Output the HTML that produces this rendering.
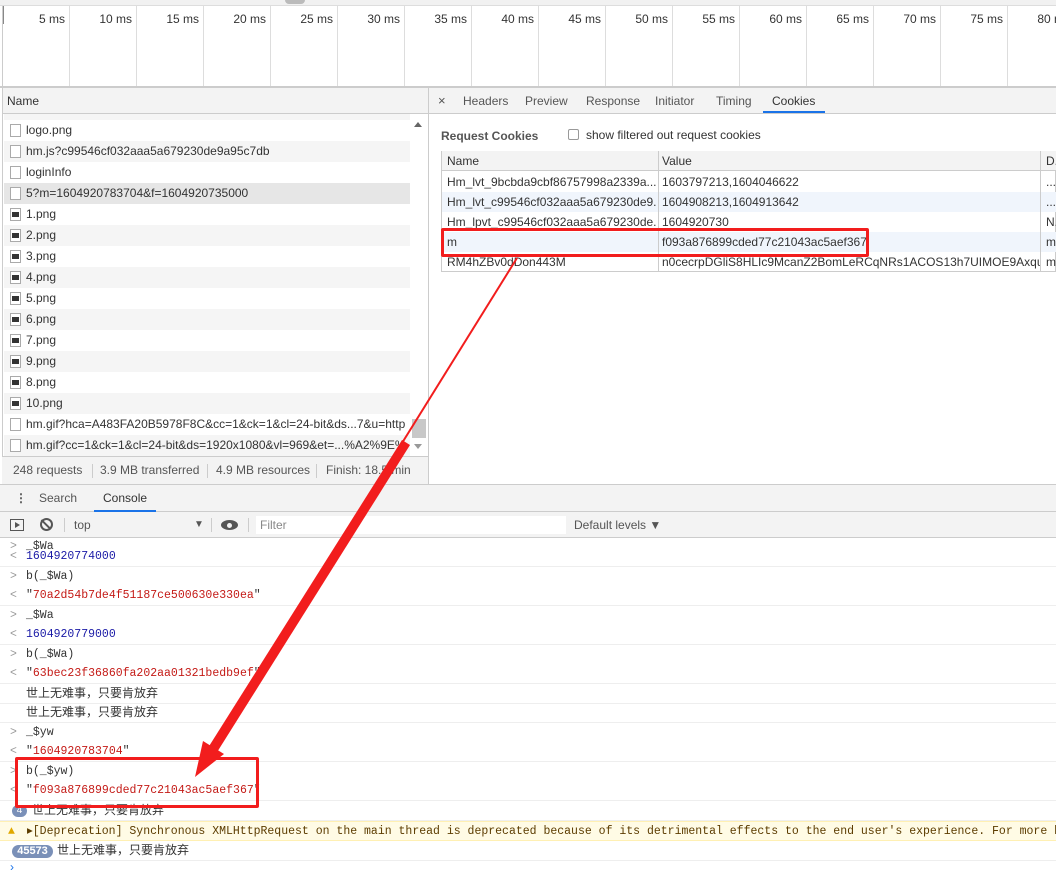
<!DOCTYPE html>
<html><head><meta charset="utf-8"><style>
*{box-sizing:border-box;margin:0;padding:0}
body{width:1056px;height:869px;overflow:hidden;background:#fff;font-family:"Liberation Sans","Noto Sans CJK SC",sans-serif;font-size:12px;color:#333;position:relative}
.a{position:absolute;white-space:nowrap}
.mono{font-family:"Liberation Mono","Noto Sans CJK SC",monospace;font-size:11.5px}
.row{position:absolute;left:4px;width:406px;height:21px;line-height:21px;padding-left:22px}
.ic{position:absolute;left:6px;top:4px;width:11px;height:13px;border:1px solid #aaa;background:#fff}
.ic.img::after{content:"";position:absolute;left:1px;top:3px;width:7px;height:5px;background:#333}
.tr{position:absolute;left:442px;width:614px;height:20px;line-height:20px}
.tr span{position:absolute;top:0;overflow:hidden}
.c1{left:5px;width:210px}.c2{left:220px;width:378px}.c3{left:604px;width:10px}
.cl{position:absolute;left:0;width:1056px;height:20px;line-height:19px;border-bottom:1px solid #eee}
</style></head><body>
<div class="a" style="left:0;top:0;width:1056px;height:6px;background:#f1f1f1;border-bottom:1px solid #ddd"></div>
<div class="a" style="left:285px;top:0;width:20px;height:4px;background:#bbb;border-radius:0 0 8px 8px"></div>
<div class="a" style="left:2px;top:6px;width:2px;height:18px;background:#888"></div>
<div class="a" style="left:2px;top:6px;width:1054px;height:80px;border-left:1px solid #ccc"></div>
<div id="tl"></div>
<div class="a" style="left:0;top:86px;width:1056px;height:2px;background:#ccc"></div>
<!-- left panel -->
<div class="a" style="left:2px;top:88px;width:426px;height:26px;background:#f3f3f3;border-bottom:1px solid #ccc;line-height:26px;padding-left:5px">Name</div>
<div class="a" style="left:428px;top:88px;width:1px;height:396px;background:#ccc"></div>
<div class="a" style="left:2px;top:88px;width:1px;height:396px;background:#ccc"></div>
<div class="row" style="top:114px;height:6px;background:#f5f5f5"></div>
<div id="rows"></div>
<div class="a" style="left:410px;top:114px;width:18px;height:342px;background:#fff"></div>
<div class="a" style="left:414px;top:122px;border:4px solid transparent;border-bottom:5px solid #666;border-top:0"></div>
<div class="a" style="left:414px;top:444px;border:4px solid transparent;border-top:5px solid #999;border-bottom:0"></div>
<div class="a" style="left:412px;top:419px;width:14px;height:19px;background:#c8c8c8"></div>
<div class="a" style="left:2px;top:456px;width:426px;height:28px;background:#f3f3f3;border-top:1px solid #ccc;line-height:27px;color:#555">
<span class="a" style="left:11px">248 requests</span><span class="a" style="left:90px;top:7px;width:1px;height:14px;background:#ccc"></span>
<span class="a" style="left:98px">3.9 MB transferred</span><span class="a" style="left:205px;top:7px;width:1px;height:14px;background:#ccc"></span>
<span class="a" style="left:214px">4.9 MB resources</span><span class="a" style="left:314px;top:7px;width:1px;height:14px;background:#ccc"></span>
<span class="a" style="left:324px">Finish: 18.5 min</span></div>
<!-- right panel -->
<div class="a" style="left:429px;top:88px;width:627px;height:26px;background:#f3f3f3;border-bottom:1px solid #ccc;line-height:26px;color:#555">
<span class="a" style="left:9px;font-size:13px">×</span>
<span class="a" style="left:34px">Headers</span><span class="a" style="left:96px">Preview</span><span class="a" style="left:157px">Response</span><span class="a" style="left:226px">Initiator</span><span class="a" style="left:287px">Timing</span><span class="a" style="left:343px;color:#333">Cookies</span>
<span class="a" style="left:334px;top:23px;width:62px;height:2px;background:#1a73e8"></span></div>
<div class="a" style="left:441px;top:129px;font-weight:bold;color:#555">Request Cookies</div>
<div class="a" style="left:568px;top:129px;width:11px;height:11px;border:1px solid #999;border-radius:2px"></div>
<div class="a" style="left:586px;top:128px">show filtered out request cookies</div>
<div class="a" style="left:441px;top:151px;width:615px;height:121px;border:1px solid #ccc"></div>
<div class="tr" style="top:151px;background:#f3f3f3;border-bottom:1px solid #ccc"><span class="c1">Name</span><span class="c2">Value</span><span class="c3">D.</span></div>
<div class="tr" style="top:172px"><span class="c1">Hm_lvt_9bcbda9cbf86757998a2339a...</span><span class="c2">1603797213,1604046622</span><span class="c3">...</span></div>
<div class="tr" style="top:192px;background:#f0f5fc"><span class="c1">Hm_lvt_c99546cf032aaa5a679230de9...</span><span class="c2">1604908213,1604913642</span><span class="c3">...</span></div>
<div class="tr" style="top:212px"><span class="c1">Hm_lpvt_c99546cf032aaa5a679230de...</span><span class="c2">1604920730</span><span class="c3">N.</span></div>
<div class="tr" style="top:232px;background:#f0f5fc"><span class="c1">m</span><span class="c2">f093a876899cded77c21043ac5aef367</span><span class="c3">m</span></div>
<div class="tr" style="top:252px"><span class="c1">RM4hZBv0dDon443M</span><span class="c2">n0cecrpDGliS8HLIc9McanZ2BomLeRCqNRs1ACOS13h7UIMOE9Axqu...</span><span class="c3">m</span></div>
<div class="a" style="left:658px;top:151px;width:1px;height:121px;background:#ccc"></div>
<div class="a" style="left:1040px;top:151px;width:1px;height:121px;background:#ccc"></div>
<div class="a" style="left:441px;top:228px;width:428px;height:29px;border:3px solid #f21d1d;border-radius:2px"></div>
<!-- console -->
<div id="con"></div>
<div class="a" style="left:0;top:484px;width:1056px;height:28px;background:#f3f3f3;border-top:1px solid #ccc;border-bottom:1px solid #ccc;line-height:27px;color:#555;z-index:2">
<span class="a" style="left:15px;font-weight:bold">⋮</span><span class="a" style="left:39px">Search</span><span class="a" style="left:103px;color:#333">Console</span>
<span class="a" style="left:94px;top:25px;width:62px;height:2px;background:#1a73e8"></span></div>
<div class="a" style="left:0;top:512px;width:1056px;height:26px;background:#f3f3f3;border-bottom:1px solid #ccc;line-height:26px;color:#555;z-index:2">
<span class="a" style="left:10px;top:7px;width:14px;height:12px;border:1px solid #555"></span><span class="a" style="left:15px;top:10px;border:3px solid transparent;border-left:5px solid #555"></span>
<span class="a" style="left:40px;top:6px;width:13px;height:13px;border:2px solid #555;border-radius:50%"></span><span class="a" style="left:45px;top:6px;width:2px;height:13px;background:#555;transform:rotate(-45deg)"></span>
<span class="a" style="left:64px;top:6px;width:1px;height:14px;background:#ccc"></span>
<span class="a" style="left:74px">top</span><span class="a" style="left:194px;font-size:10px">▼</span>
<span class="a" style="left:211px;top:6px;width:1px;height:14px;background:#ccc"></span>
<span class="a" style="left:221px;top:8px;width:17px;height:10px;border-radius:50%;background:#555"></span><span class="a" style="left:227px;top:11px;width:5px;height:5px;border-radius:50%;background:#f3f3f3"></span>
<span class="a" style="left:248px;top:6px;width:1px;height:14px;background:#ccc"></span>
<span class="a" style="left:256px;top:4px;width:310px;height:18px;background:#fff;line-height:18px;padding-left:4px;color:#888">Filter</span>
<span class="a" style="left:574px">Default levels ▼</span></div>
<div class="a" style="left:15px;top:757px;width:244px;height:51px;border:3px solid #f21d1d;border-radius:2px;z-index:3"></div>
<svg class="a" style="left:0;top:0;z-index:3" width="1056" height="869"><line x1="517" y1="258" x2="210" y2="752" stroke="#f21d1d" stroke-width="2"/><polygon points="402,440 410,445 214,757 206,751" fill="#f21d1d"/><polygon points="195,777 203,741 224,754" fill="#f21d1d"/></svg>
<script>
var t='';for(var i=1;i<=16;i++){var x=i*67+2;t+='<div class="a" style="left:'+(x)+'px;top:6px;width:1px;height:80px;background:#ddd"></div><div class="a" style="left:'+(x-60)+'px;top:12px;width:56px;text-align:right;color:#333">'+(i*5)+' ms</div>';}
document.getElementById('tl').innerHTML=t;
var r=[['logo.png',''],['hm.js?c99546cf032aaa5a679230de9a95c7db',''],['loginInfo',''],['5?m=1604920783704&amp;f=1604920735000',''],['1.png','img'],['2.png','img'],['3.png','img'],['4.png','img'],['5.png','img'],['6.png','img'],['7.png','img'],['9.png','img'],['8.png','img'],['10.png','img'],['hm.gif?hca=A483FA20B5978F8C&amp;cc=1&amp;ck=1&amp;cl=24-bit&amp;ds...7&amp;u=http',''],['hm.gif?cc=1&amp;ck=1&amp;cl=24-bit&amp;ds=1920x1080&amp;vl=969&amp;et=...%A2%9E%','']];
t='';r.forEach(function(e,i){var bg=i==3?'#e6e6e6':(i%2?'#f5f5f5':'#fff');t+='<div class="row" style="top:'+(120+i*21)+'px;background:'+bg+'"><span class="ic '+e[1]+'"></span>'+e[0]+'</div>';});
document.getElementById('rows').innerHTML=t;
var c=[[537,'&gt;','_$Wa','#333',1],[547,'&lt;','1604920774000','#1a1aa6',0],[567,'&gt;','b(_$Wa)','#333',1],[586,'&lt;','"<span style=color:#c41a16>70a2d54b7de4f51187ce500630e330ea</span>"','#333',0],[606,'&gt;','_$Wa','#333',1],[625,'&lt;','1604920779000','#1a1aa6',0],[645,'&gt;','b(_$Wa)','#333',1],[664,'&lt;','"<span style=color:#c41a16>63bec23f36860fa202aa01321bedb9ef</span>"','#333',0],[684,'','<span style="font-family:Liberation Sans,Noto Sans CJK SC;font-size:12px">世上无难事，只要肯放弃</span>','#333',0],[703,'','<span style="font-family:Liberation Sans,Noto Sans CJK SC;font-size:12px">世上无难事，只要肯放弃</span>','#333',0],[723,'&gt;','_$yw','#333',1],[742,'&lt;','"<span style=color:#c41a16>1604920783704</span>"','#333',0],[762,'&gt;','b(_$yw)','#333',1],[781,'&lt;','"<span style=color:#c41a16>f093a876899cded77c21043ac5aef367</span>"','#333',0]];
t='';c.forEach(function(e){t+='<div class="cl mono" style="top:'+e[0]+'px;'+(e[4]?'border-bottom:0;':'')+'color:'+e[3]+'"><span class="a" style="left:10px;color:#999">'+e[1]+'</span><span class="a" style="left:26px">'+e[2]+'</span></div>';});
t+='<div class="cl" style="top:801px"><span class="a" style="left:12px;top:4px;width:15px;height:12px;border-radius:6px;background:#7a90b8;color:#fff;font-size:10px;line-height:12px;text-align:center">4</span><span class="a" style="left:32px">世上无难事，只要肯放弃</span></div>';
t+='<div class="cl mono" style="top:821px;background:#fffbe5;border-top:1px solid #fff0b3;border-bottom:1px solid #fff0b3;color:#5c3c00"><span class="a" style="left:8px;color:#e0a800">▲</span><span class="a" style="left:27px">▸[Deprecation] Synchronous XMLHttpRequest on the main thread is deprecated because of its detrimental effects to the end user\'s experience. For more help, c</span></div>';
t+='<div class="cl" style="top:841px"><span class="a" style="left:12px;top:4px;width:41px;height:13px;border-radius:7px;background:#7a90b8;color:#fff;font-size:11px;font-weight:bold;line-height:13px;text-align:center">45573</span><span class="a" style="left:57px">世上无难事，只要肯放弃</span></div>';
t+='<div class="a" style="left:10px;top:860px;color:#1a73e8">›</div>';
document.getElementById('con').innerHTML=t;
</script>
</body></html>
